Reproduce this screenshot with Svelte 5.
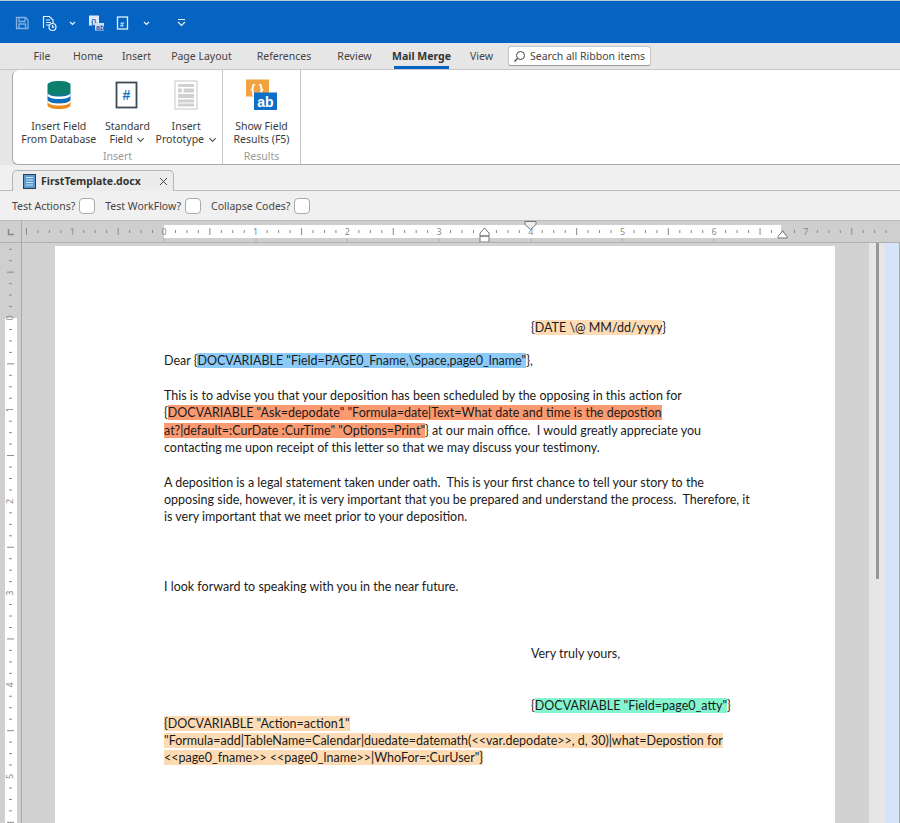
<script>
  const tabs = [
    { t: 'File', w: 44 }, { t: 'Home', w: 48 }, { t: 'Insert', w: 49 }, { t: 'Page Layout', w: 81 },
    { t: 'References', w: 84 }, { t: 'Review', w: 57 }, { t: 'Mail Merge', w: 77, active: true }, { t: 'View', w: 43 }
  ];
  const U = 91.7;
  const hTicks = [];
  for (let i = -12; i <= 66; i++) {
    const x = 142 + i * U / 8;
    if (i % 8 === 0) continue;
    hTicks.push({ x, half: i % 4 === 0 });
  }
  const hNums = [-1, 0, 1, 2, 3, 4, 5, 6, 7].map((n) => ({ n: Math.abs(n), x: 142 + n * U }));
  const vTicks = [];
  for (let i = -8; i <= 45; i++) {
    if (i % 8 === 0) continue;
    vTicks.push({ y: 75 + i * U / 8, half: i % 4 === 0 });
  }
  const vNums = [-3, -2, -1, 0, 1, 2, 3, 4, 5].map((n) => ({ n: Math.abs(n), y: 75 + n * U }));
</script>

<div class="app">
  <header class="titlebar">
    <svg class="qat" width="200" height="43" viewBox="0 0 200 43" aria-hidden="true">
      <g fill="none" stroke="#7fb0e4" stroke-width="1.3">
        <path d="M16.5 16.5h9l2.5 2.5v8.5h-11.500z" />
        <path d="M19 16.500v4h6v-4M19 27.500v-4.500h6.500v4.500" />
      </g>
      <g fill="none" stroke="#e8f1fb" stroke-width="1.200">
        <path d="M43.500 27v-11.500h6l3.500 3.500v3" />
        <path d="M46 19h4M46 21.500h5M46 24h3" />
        <circle cx="52.500" cy="26" r="3.500" />
        <path d="M52.500 24v2.200h1.800" />
      </g>
      <path d="M70 21l2.500 2.500 2.500-2.500M144 21l2.500 2.500 2.500-2.500" fill="none" stroke="#e8f1fb" stroke-width="1.200" />
      <rect x="89" y="14.500" width="10" height="10" fill="#dfeaf7" />
      <text x="91" y="22.500" class="qt" fill="#0563c1">{'{}'}</text>
      <rect x="95" y="22" width="9" height="7.500" fill="#cfe0f4" />
      <text x="96" y="28.500" class="qt" fill="#0563c1">ab</text>
      <rect x="117.500" y="16" width="10" height="12" fill="none" stroke="#e8f1fb" stroke-width="1.300" />
      <text x="120" y="25.500" class="qt" fill="#e8f1fb">#</text>
      <path d="M178 18.500h7M178 21l3.500 3.500 3.500-3.500" fill="none" stroke="#e8f1fb" stroke-width="1.100" />
    </svg>
  </header>

  <nav class="tabs">
    {#each tabs as tab}
      <span class="tab" class:active={tab.active} style="width:{tab.w}px">{tab.t}</span>
    {/each}
    <div class="search">
      <svg width="13" height="13" viewBox="0 0 13 13" aria-hidden="true">
        <circle cx="7.500" cy="5.500" r="4" fill="none" stroke="#444" stroke-width="1" />
        <path d="M4.500 8.500l-3 3" stroke="#444" stroke-width="1.200" />
      </svg>
      <span>Search all Ribbon items</span>
    </div>
  </nav>

  <section class="ribbon">
    <div class="group insert-group">
      <div class="buttons">
        <div class="rbtn db">
          <svg width="26" height="30" viewBox="0 0 26 30" aria-hidden="true">
            <path d="M1.500 20.500v4.500c0 2.500 5 4 11.500 4s11.500-1.500 11.500-4v-4.500z" fill="#ef8a1c" />
            <path d="M1.500 12v7.500c0 2.500 5 4 11.500 4s11.500-1.500 11.500-4v-7.500z" fill="#0d6ebf" />
            <path d="M1.500 12.500c0 2.500 5 4 11.500 4s11.500-1.500 11.500-4v2.500c0 2.500-5 4-11.500 4s-11.500-1.500-11.500-4z" fill="#fff" />
            <path d="M1.500 19.500c0 2.500 5 4 11.500 4s11.500-1.500 11.500-4v2c0 2.500-5 4-11.500 4s-11.500-1.500-11.500-4z" fill="#fff" />
            <path d="M1.500 5v6.500c0 2.500 5 4 11.500 4s11.500-1.500 11.500-4v-6.500c0-2.500-5-4-11.500-4s-11.500 1.500-11.500 4z" fill="#0b7f6b" />
          </svg>
          <span>Insert Field<br />From Database</span>
        </div>
        <div class="rbtn std">
          <svg width="24" height="28" viewBox="0 0 24 28" aria-hidden="true">
            <rect x="1.500" y="1.500" width="20" height="25" fill="#fff" stroke="#3c4a57" stroke-width="1.800" />
            <text x="11.500" y="19" class="hash">#</text>
          </svg>
          <span>Standard<br />Field <i class="chev"></i></span>
        </div>
        <div class="rbtn proto">
          <svg width="24" height="30" viewBox="0 0 24 30" aria-hidden="true">
            <rect x="1" y="1" width="22" height="28" fill="#fff" stroke="#cfcfcf" stroke-width="1.200" />
            <path d="M4 4h16v3h-16zM4 8.500h4v4h-4zM9.500 8.500h10.500v4h-10.500zM4 14h16v4h-16zM4 19.500h16v3h-16zM4 23.500h16v3h-16z" fill="#d0d0d0" />
          </svg>
          <span>Insert<br />Prototype <i class="chev"></i></span>
        </div>
      </div>
      <div class="glabel">Insert</div>
    </div>
    <div class="group results-group">
      <div class="buttons">
        <div class="rbtn show">
          <svg width="31" height="31" viewBox="0 0 31 31" aria-hidden="true">
            <rect x="0" y="0" width="23" height="17" fill="#f0a33f" />
            <text x="11" y="13" class="brace">{'{ }'}</text>
            <rect x="8" y="13" width="23" height="17.500" fill="#0f6fc6" />
            <text x="19.500" y="27" class="ab">ab</text>
          </svg>
          <span>Show Field<br />Results (F5)</span>
        </div>
      </div>
      <div class="glabel">Results</div>
    </div>
  </section>

  <div class="docstrip">
    <div class="doctab">
      <svg width="13" height="15" viewBox="0 0 13 15" aria-hidden="true">
        <rect x=".5" y=".5" width="12" height="14" fill="#5b9bd5" stroke="#2f3e4e" />
        <path d="M3 3.500h7M3 6h7M3 8.500h7M3 11h7" stroke="#cfe2f5" stroke-width="1" />
      </svg>
      <b>FirstTemplate.docx</b>
      <svg class="x" width="9" height="9" viewBox="0 0 9 9" aria-hidden="true">
        <path d="M1 1l7 7M8 1l-7 7" stroke="#444" stroke-width="1" />
      </svg>
    </div>
  </div>

  <div class="options">
    <label>Test Actions?<span class="box"></span></label>
    <label>Test WorkFlow?<span class="box"></span></label>
    <label>Collapse Codes?<span class="box"></span></label>
  </div>

  <div class="rulerrow">
    <div class="corner">
      <svg width="8" height="8" viewBox="0 0 8 8" aria-hidden="true"><path d="M1.500 1v5.500h5.500" fill="none" stroke="#888" stroke-width="1.500" /></svg>
    </div>
    <svg class="hruler" width="878" height="21" viewBox="0 0 878 21" aria-hidden="true">
      <rect x="142" y="4" width="617" height="13" fill="#fff" />
      {#each hTicks as t}
        <line x1={t.x} x2={t.x} y1={t.half ? 7 : 9} y2={t.half ? 14 : 12} stroke="#8a8a8a" />
      {/each}
      {#each hNums as n}
        <text x={n.x} y="14" class="rnum">{n.n}</text>
      {/each}
      <path d="M142 17.500v3M234 17.500v3M325 17.500v3M417 17.500v3M509 17.500v3M600 17.500v3M692 17.500v3" stroke="#aaa" />
      <path d="M503 0.500h11v3l-5.500 5-5.500-5z" fill="#eee" stroke="#777" />
      <path d="M458 12l4.500-5 4.500 5v3h-9zM458 15h9v6h-9z" fill="#fff" stroke="#777" />
      <path d="M756 15.500l4.500-5.500 4.500 5.500v1.500h-9z" fill="#fff" stroke="#777" />
    </svg>
  </div>

  <div class="workspace">
    <div class="vruler">
      <svg width="22" height="580" viewBox="0 0 22 580" aria-hidden="true">
        <rect x="5" y="75" width="12" height="505" fill="#fff" />
        {#each vTicks as t}
          <line x1={t.half ? 7 : 9} x2={t.half ? 14 : 12} y1={t.y} y2={t.y} stroke="#8a8a8a" />
        {/each}
        {#each vNums as n}
          <text x="11" y={n.y} class="rnumv" transform="rotate(-90 11 {n.y})">{n.n}</text>
        {/each}
      </svg>
    </div>
    <div class="canvas">
      <article class="page">
        <p class="r1 tab4">{'{'}<mark class="tan">DATE \@ MM/dd/yyyy</mark>{'}'}</p>
        <p class="r2">Dear {'{'}<mark class="blue">DOCVARIABLE "Field=PAGE0_Fname,\Space,page0_lname"</mark>{'}'},</p>
        <p class="r3">This is to advise you that your deposition has been scheduled by the opposing in this action for<br />{'{'}<mark class="red">DOCVARIABLE "Ask=depodate" "Formula=date|Text=What date and time is the depostion<br />at?|default=:CurDate :CurTime" "Options=Print"</mark>{'}'} at our main office.&nbsp; I would greatly appreciate you<br />contacting me upon receipt of this letter so that we may discuss your testimony.</p>
        <p class="r3">A deposition is a legal statement taken under oath.&nbsp; This is your first chance to tell your story to the<br />opposing side, however, it is very important that you be prepared and understand the process.&nbsp; Therefore, it<br />is very important that we meet prior to your deposition.</p>
        <p class="r4">I look forward to speaking with you in the near future.</p>
        <p class="r5 tab4">Very truly yours,</p>
        <p class="r6 tab4">{'{'}<mark class="green">DOCVARIABLE "Field=page0_atty"</mark>{'}'}</p>
        <p class="r7"><mark class="tan">{'{'}DOCVARIABLE "Action=action1"<br />"Formula=add|TableName=Calendar|duedate=datemath(&lt;&lt;var.depodate&gt;&gt;, d, 30)|what=Depostion for<br />&lt;&lt;page0_fname&gt;&gt; &lt;&lt;page0_lname&gt;&gt;|WhoFor=:CurUser"{'}'}</mark></p>
      </article>
    </div>
    <div class="scroll"><div class="thumb"></div></div>
    <div class="side"></div>
  </div>
</div>

<style>
  :global(body) { margin: 0; background: #fff; }
  .app {
    width: 900px; height: 823px; overflow: hidden; display: flex; flex-direction: column;
    font-family: "Noto Sans", "Open Sans", sans-serif; font-size: 11px; color: #333; background: #e6e6e6;
  }
  .titlebar { height: 42px; background: #0563c1; border-top: 1px solid #b9c9dc; flex: none; }
  .qat { display: block; }
  .qt { font: 700 7px "Liberation Sans", sans-serif; }
  .tabs {
    height: 27px; flex: none; display: flex; align-items: center; padding-left: 20px; background: #e6e6e6; box-sizing: border-box;
    border-bottom: 1px solid #c8c8c8;
  }
  .tab { text-align: center; font-size: 10.500px; line-height: 26px; height: 26px; color: #444; position: relative; white-space: nowrap; }
  .tab.active { font-weight: 700; color: #333; }
  .tab.active::after {
    content: ""; position: absolute; left: 18px; right: 18px; bottom: 0; height: 3px; background: #0563c1;
    left: 11px; right: 11px;
  }
  .search {
    margin-left: 5px; width: 141px; height: 19px; background: #fff; border: 1px solid #c4c4c4; border-radius: 3px;
    display: flex; align-items: center; gap: 4px; padding-left: 4px; box-sizing: content-box; font-size: 10.500px; color: #444;
    border-bottom-color: #999; height: 18px; width: 137px;
  }
  .ribbon {
    height: 95px; flex: none; margin-left: 12px; background: #fff; border: 1px solid #c0c0c0; border-right: 0; border-top: 0;
    border-radius: 0 0 0 6px; border-top-left-radius: 6px; display: flex; box-sizing: border-box;
    border-left-color: #aaa; border-bottom-color: #aaa;
  }
  .group { display: flex; flex-direction: column; border-right: 1px solid #c6c6c6; box-sizing: border-box; }
  .insert-group { width: 210px; }
  .results-group { width: 78px; }
  .buttons { display: flex; flex: 1; justify-content: center; }
  .rbtn {
    display: flex; flex-direction: column; align-items: center; font-size: 10.500px; line-height: 12.500px; text-align: center; color: #3a3a3a;
    white-space: nowrap; padding-top: 9px;
  }
  .rbtn svg { display: block; height: 32px; margin-bottom: 9px; }
  .db { width: 92px; margin-left: 0; }
  .std { width: 46px; }
  .proto { width: 72px; }
  .show { width: 78px; }
  .hash { font: 700 14px "Liberation Sans", sans-serif; fill: #0f6fc6; text-anchor: middle; }
  .brace { font: 700 12px "Liberation Sans", sans-serif; fill: #fff; text-anchor: middle; }
  .ab { font: 700 14px "Liberation Sans", sans-serif; fill: #fff; text-anchor: middle; }
  .chev {
    display: inline-block; width: 4px; height: 4px; border-right: 1px solid #444; border-bottom: 1px solid #444;
    transform: rotate(45deg); margin: 0 2px 2px 3px;
  }
  .glabel { text-align: center; color: #9a9a9a; font-size: 10.500px; line-height: 12px; padding-bottom: 2px; }
  .docstrip {
    height: 26px; flex: none; background: #f0f0f0; border-bottom: 1px solid #bdbdbd; box-sizing: border-box; padding-left: 12px;
    display: flex; align-items: flex-end;
  }
  .doctab {
    width: 162px; height: 21px; background: #ececec; border: 1px solid #b5b5b5; border-bottom: 0; border-radius: 5px 5px 0 0;
    display: flex; align-items: center; padding-left: 10px; gap: 5px; box-sizing: border-box; margin-bottom: -1px; font-size: 10.500px; color: #333;
  }
  .doctab b { font-weight: 700; white-space: nowrap; }
  .doctab .x { margin-left: 13px; }
  .options {
    height: 30px; flex: none; display: flex; align-items: center; padding-left: 12px; gap: 10px; background: #f0f0f0;
    box-sizing: border-box; font-size: 10.500px; color: #444; border-bottom: 1px solid #bbb;
  }
  .options label { display: flex; align-items: center; gap: 4px; white-space: nowrap; }
  .box { width: 14px; height: 14px; background: #fff; border: 1px solid #aaa; border-radius: 4px; display: block; }
  .rulerrow { height: 22px; flex: none; display: flex; background: #cfcfcf; border-bottom: 1px solid #b0b0b0; box-sizing: border-box; }
  .corner { width: 21px; flex: none; border-right: 1px solid #a8a8a8; display: flex; align-items: center; justify-content: center; }
  .hruler { display: block; flex: none; }
  .rnum { font-size: 9px; fill: #8a8a8a; text-anchor: middle; font-family: "Noto Sans", sans-serif; paint-order: stroke; stroke: #fff; stroke-width: 0; }
  .rnumv { font-size: 9px; fill: #8a8a8a; text-anchor: middle; dominant-baseline: middle; font-family: "Noto Sans", sans-serif; }
  .workspace { flex: 1; display: flex; min-height: 0; }
  .vruler { width: 21px; flex: none; border-right: 1px solid #a8a8a8; background: #cfcfcf; overflow: hidden; }
  .vruler svg { display: block; }
  .canvas { width: 847px; flex: none; background: #d2d2d2; padding: 3px 0 0 33px; box-sizing: border-box; overflow: hidden; }
  .page {
    width: 780px; height: 700px; background: #fff; box-sizing: border-box; padding: 73px 40px 0 109px;
    font-family: Lato, "Open Sans", sans-serif; font-size: 12.500px; line-height: 17.300px; color: #1b1b1b; white-space: nowrap;
  }
  .page p { margin: 0; }
  .r2 { margin-top: 16px !important; }
  .r3 { margin-top: 17.500px !important; }
  .r4 { margin-top: 52px !important; }
  .r5 { margin-top: 50px !important; }
  .r6 { margin-top: 35px !important; }
  .tab4 { padding-left: 367px; }
  mark { color: inherit; }
  .tan { background: #fddcb5; }
  .blue { background: #8ccbf8; }
  .red { background: #fb9a71; }
  .green { background: #84f5cf; }
  .scroll { width: 16px; flex: none; background: #e6e6e6; }
  .thumb { width: 3px; height: 336px; margin: 0 0 0 7px; background: #979797; }
  .side { flex: 1; background: #d6e4fa; border-right: 1px solid #aaa; box-shadow: inset 0 0 0 0 #fff; }
</style>
